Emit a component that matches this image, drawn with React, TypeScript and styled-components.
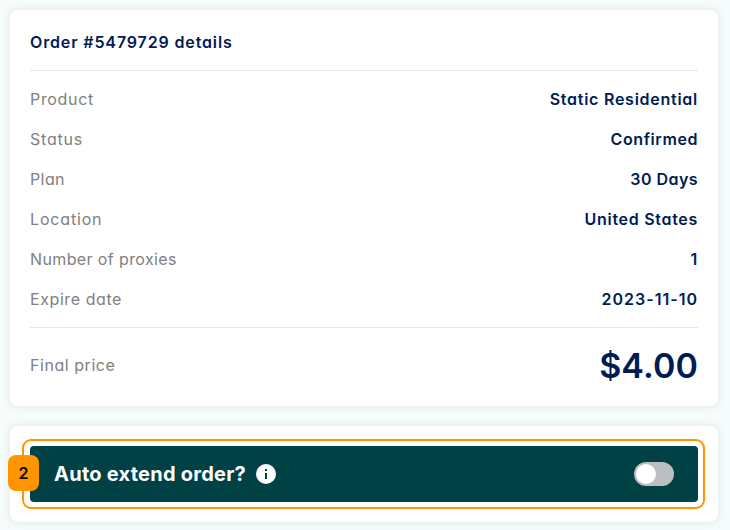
import React from 'react';
import styled, { createGlobalStyle } from 'styled-components';

const GlobalStyle = createGlobalStyle`
  *, *::before, *::after { box-sizing: border-box; }
  body {
    margin: 0;
    height: 530px;
    overflow: hidden;
    background: #f6fbfb;
    color: #001c54;
    font-family: Inter, 'Liberation Sans', sans-serif;
    font-feature-settings: 'cv11' 1;
  }
`;

const Page = styled.main`
  width: 730px;
  height: 530px;
  padding: 10px 12px 8px 10px;
  display: flex;
  flex-direction: column;
  gap: 20px;
`;

const Card = styled.section`
  background: #fff;
  border-radius: 8px;
  padding: 20px;
  box-shadow: 0 0 10px rgba(0, 40, 40, 0.1);
`;

const DetailsCard = styled(Card)`
  height: 396px;
`;

const Title = styled.h2<{ $spacing: number }>`
  margin: 0;
  height: 41px;
  border-bottom: 1px solid #e6e8e8;
  font-size: 16px;
  line-height: 24px;
  font-weight: 600;
  letter-spacing: ${(p) => p.$spacing}px;
`;

const Rows = styled.dl`
  margin: 0;
  height: 257px;
  padding-top: 8px;
  border-bottom: 1px solid #e6e8e8;
`;

const Row = styled.div`
  display: flex;
  align-items: center;
  justify-content: space-between;
  height: 40px;
`;

const Label = styled.dt<{ $spacing: number }>`
  color: #808080;
  font-size: 16px;
  line-height: 24px;
  letter-spacing: ${(p) => p.$spacing}px;
`;

const Value = styled.dd<{ $spacing: number }>`
  margin: 0;
  font-size: 16px;
  line-height: 24px;
  font-weight: 600;
  letter-spacing: ${(p) => p.$spacing}px;
`;

const PriceRow = styled.div`
  display: flex;
  align-items: center;
  justify-content: space-between;
  height: 75px;
`;

const PriceLabel = styled(Label)`
  padding-bottom: 2px;
`;

const Price = styled.strong`
  font-size: 34px;
  line-height: 40px;
  font-weight: 600;
  letter-spacing: 0.1px;
`;

const Banner = styled.div`
  position: relative;
  display: flex;
  align-items: center;
  height: 56px;
  padding: 0 24px;
  border-radius: 4px;
  background: #004146;
  color: #fff;
`;

const Highlight = styled.div`
  position: absolute;
  inset: -7px -7px -7px -8px;
  border: 2px solid #ff9500;
  border-radius: 9px;
  pointer-events: none;
`;

const StepBadge = styled.span`
  position: absolute;
  left: -22px;
  top: 9px;
  width: 31px;
  height: 36px;
  border-radius: 8px;
  background: #ff9500;
  color: #0c0c0c;
  font-size: 16px;
  line-height: 36px;
  font-weight: 600;
  text-align: center;
`;

const Question = styled.span`
  font-size: 20px;
  line-height: 28px;
  font-weight: 700;
  letter-spacing: 0.25px;
`;

const InfoIcon = styled.svg`
  width: 20px;
  height: 20px;
  margin-left: 10px;
`;

const Toggle = styled.button`
  width: 40px;
  height: 24px;
  margin-left: auto;
  padding: 2px;
  border: 0;
  border-radius: 12px;
  background: #bcbec0;
  display: flex;
`;

const Knob = styled.span`
  width: 20px;
  height: 20px;
  border-radius: 50%;
  background: #fff;
`;

const details = [
  { label: 'Product', value: 'Static Residential', labelSpacing: 0.67, valueSpacing: 0.74 },
  { label: 'Status', value: 'Confirmed', labelSpacing: 0.8, valueSpacing: 0.58 },
  { label: 'Plan', value: '30 Days', labelSpacing: 0.4, valueSpacing: 0.45 },
  { label: 'Location', value: 'United States', labelSpacing: 0.83, valueSpacing: 0.7 },
  { label: 'Number of proxies', value: '1', labelSpacing: 0.38, valueSpacing: 0.8 },
  { label: 'Expire date', value: '2023-11-10', labelSpacing: 0.58, valueSpacing: 1 },
];

export default function App() {
  return (
    <Page>
      <GlobalStyle />
      <DetailsCard>
        <Title $spacing={0.86}>Order #5479729 details</Title>
        <Rows>
          {details.map((d) => (
            <Row key={d.label}>
              <Label $spacing={d.labelSpacing}>{d.label}</Label>
              <Value $spacing={d.valueSpacing}>{d.value}</Value>
            </Row>
          ))}
        </Rows>
        <PriceRow>
          <PriceLabel as="span" $spacing={0.55}>Final price</PriceLabel>
          <Price>$4.00</Price>
        </PriceRow>
      </DetailsCard>
      <Card>
        <Banner>
          <Question>Auto extend order?</Question>
          <InfoIcon viewBox="0 0 20 20" aria-label="More information">
            <circle cx="10" cy="10" r="10" fill="#fff" />
            <path d="M9 5h2v2H9zM9 9h2v6H9z" fill="#004146" />
          </InfoIcon>
          <Toggle role="switch" aria-checked="false" aria-label="Auto extend order">
            <Knob />
          </Toggle>
          <Highlight />
          <StepBadge>2</StepBadge>
        </Banner>
      </Card>
    </Page>
  );
}
